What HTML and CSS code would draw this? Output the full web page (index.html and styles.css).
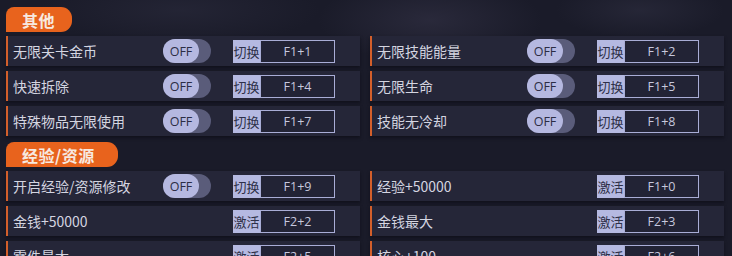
FILE: index.html
```html
<!DOCTYPE html>
<html lang="zh">
<head>
<meta charset="utf-8">
<link rel="stylesheet" href="styles.css">
</head>
<body>
<div class="page">
  <section class="section">
    <div class="tag">其他</div>
    <div class="grid">
      <div class="row"><span class="label">无限关卡金币</span><span class="toggle"><span class="knob">OFF</span></span><span class="key"><span class="act">切换</span><span class="combo">F1+1</span></span></div>
      <div class="row"><span class="label">无限技能能量</span><span class="toggle"><span class="knob">OFF</span></span><span class="key"><span class="act">切换</span><span class="combo">F1+2</span></span></div>
      <div class="row"><span class="label">快速拆除</span><span class="toggle"><span class="knob">OFF</span></span><span class="key"><span class="act">切换</span><span class="combo">F1+4</span></span></div>
      <div class="row"><span class="label">无限生命</span><span class="toggle"><span class="knob">OFF</span></span><span class="key"><span class="act">切换</span><span class="combo">F1+5</span></span></div>
      <div class="row"><span class="label">特殊物品无限使用</span><span class="toggle"><span class="knob">OFF</span></span><span class="key"><span class="act">切换</span><span class="combo">F1+7</span></span></div>
      <div class="row"><span class="label">技能无冷却</span><span class="toggle"><span class="knob">OFF</span></span><span class="key"><span class="act">切换</span><span class="combo">F1+8</span></span></div>
    </div>
  </section>
  <section class="section second">
    <div class="tag">经验/资源</div>
    <div class="grid">
      <div class="row"><span class="label">开启经验/资源修改</span><span class="toggle"><span class="knob">OFF</span></span><span class="key"><span class="act">切换</span><span class="combo">F1+9</span></span></div>
      <div class="row"><span class="label wide">经验+50000</span><span class="key"><span class="act">激活</span><span class="combo">F1+0</span></span></div>
      <div class="row"><span class="label wide">金钱+50000</span><span class="key"><span class="act">激活</span><span class="combo">F2+2</span></span></div>
      <div class="row"><span class="label wide">金钱最大</span><span class="key"><span class="act">激活</span><span class="combo">F2+3</span></span></div>
      <div class="row"><span class="label wide">零件最大</span><span class="key"><span class="act">激活</span><span class="combo">F2+5</span></span></div>
      <div class="row"><span class="label wide">核心+100</span><span class="key"><span class="act">激活</span><span class="combo">F2+6</span></span></div>
    </div>
  </section>
</div>
</body>
</html>
```
FILE: styles.css
```css
html, body {
  margin: 0;
  padding: 0;
  width: 732px;
  height: 256px;
  overflow: hidden;
}
body {
  background:
    radial-gradient(ellipse 160px 60px at 430px 20px, rgba(60,58,80,0.45), transparent 70%),
    radial-gradient(ellipse 200px 50px at 180px 10px, rgba(50,50,70,0.4), transparent 70%),
    radial-gradient(ellipse 120px 40px at 640px 10px, rgba(55,55,75,0.4), transparent 70%),
    #1a1b29;
  font-family: "Noto Sans CJK SC", "Noto Sans", sans-serif;
  color: #d2d3de;
}
.page {
  padding: 7px 0 0 6px;
}
.section.second {
  margin-top: 6px;
}
.tag {
  display: inline-flex;
  align-items: center;
  height: 25px;
  width: 66px;
  box-sizing: border-box;
  padding-left: 16px;
  background: #e8631d;
  color: #f7e9e0;
  font-weight: 700;
  font-size: 16px;
  letter-spacing: 0.5px;
  border-radius: 8px 11px 11px 0;
  margin-bottom: 4px;
}
.second .tag {
  width: 112px;
}
.grid {
  display: grid;
  grid-template-columns: 354px 354px;
  column-gap: 10px;
  row-gap: 5px;
}
.row {
  display: flex;
  align-items: center;
  height: 30px;
  box-sizing: border-box;
  border-left: 2px solid #d35f2b;
  padding-left: 5px;
  background: #252638;
  box-shadow: 0 2px 3px rgba(8,8,16,0.5);
}
.label {
  width: 150px;
  font-size: 14px;
  color: #d4d5e0;
  white-space: nowrap;
}
.label.wide {
  width: 220px;
}
.toggle {
  display: flex;
  width: 48px;
  height: 24px;
  border-radius: 12px;
  background: #5a5c7a;
  margin-right: 22px;
}
.knob {
  display: flex;
  align-items: center;
  justify-content: center;
  width: 36px;
  height: 24px;
  border-radius: 12px;
  background: #b5b8e0;
  color: #2c2d44;
  font-family: "Open Sans", "Noto Sans", sans-serif;
  font-size: 12.5px;
}
.key {
  display: flex;
  height: 23px;
}
.act {
  display: flex;
  align-items: center;
  justify-content: center;
  width: 27px;
  background: #b5b9e1;
  color: #2e3048;
  font-size: 13px;
}
.combo {
  display: flex;
  align-items: center;
  justify-content: center;
  width: 75px;
  box-sizing: border-box;
  border: 1px solid #a9add6;
  background: #222335;
  color: #c6c8de;
  font-family: "Open Sans", "Noto Sans", sans-serif;
  font-size: 12.5px;
}
```
